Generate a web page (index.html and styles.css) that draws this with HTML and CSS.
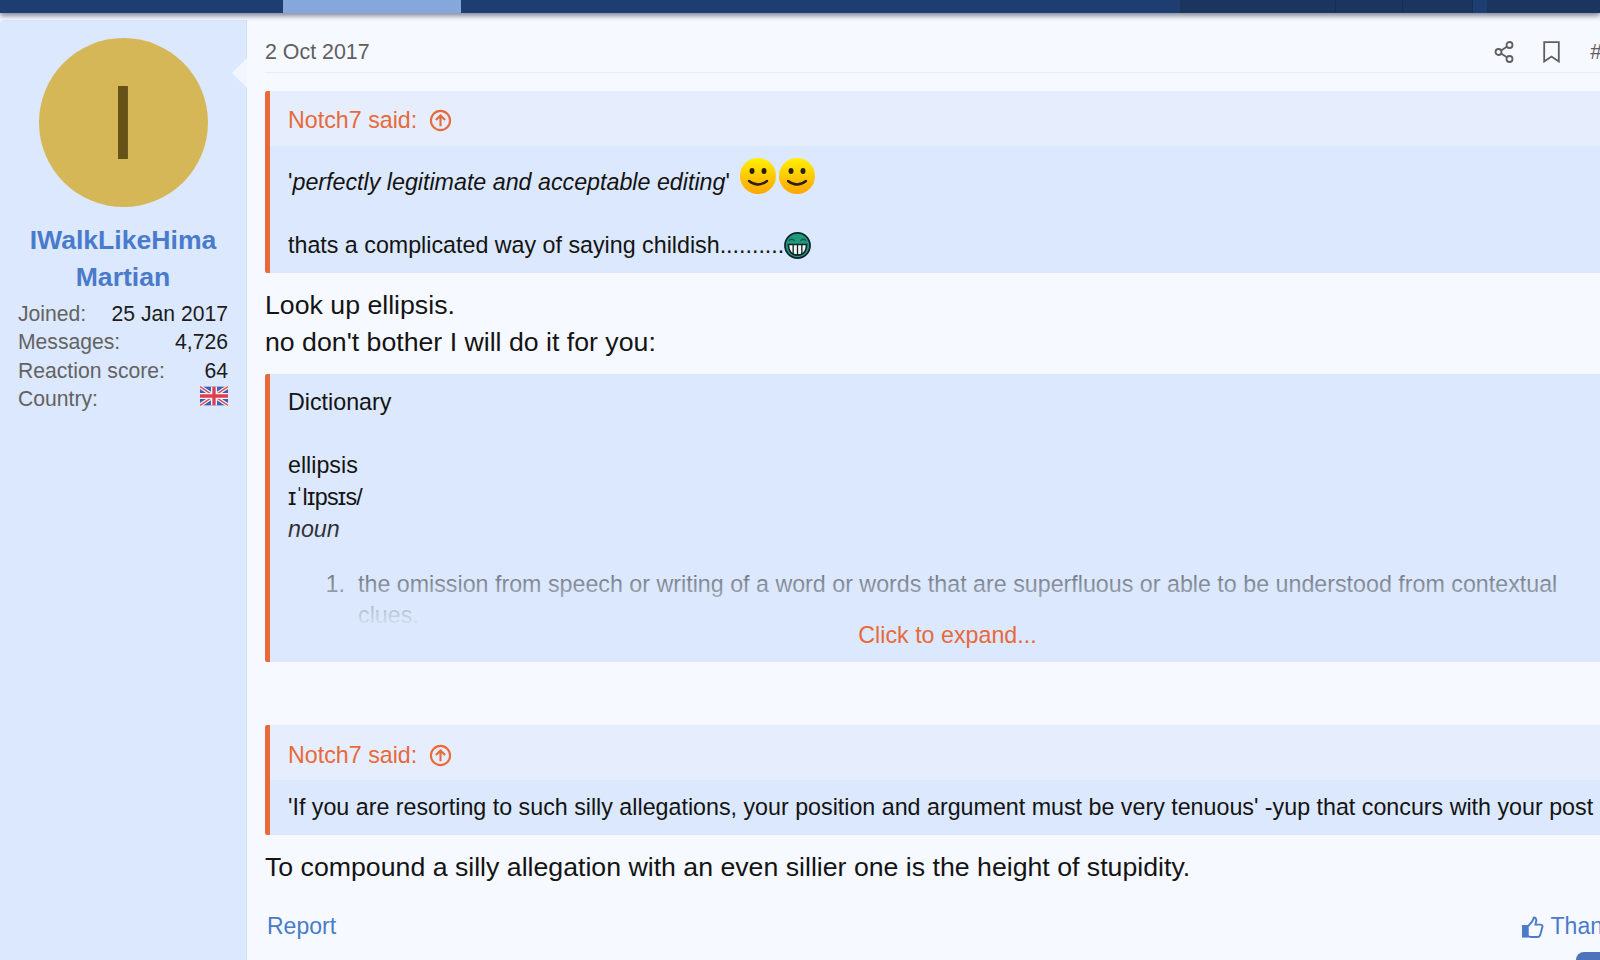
FILE: index.html
```html
<!DOCTYPE html>
<html lang="en">
<head>
    <meta charset="UTF-8">
    <meta name="viewport" content="width=device-width, initial-scale=1.0">
    <title>Forum post</title>
    <link rel="stylesheet" href="styles.css">
</head>
<body>
    <div class="topbar">
        <div class="nav-seg nav-home"></div>
        <div class="nav-seg nav-active"></div>
        <div class="nav-seg nav-fill"></div>
        <div class="nav-seg nav-user nav-user-a"></div>
        <div class="nav-seg nav-user nav-user-b"></div>
        <div class="nav-seg nav-user nav-user-c"></div>
        <div class="nav-seg nav-mark"></div>
        <div class="nav-seg nav-end"></div>
    </div>
    <div class="post">
        <aside class="sidebar">
            <div class="avatar"><span>I</span></div>
            <a class="username">IWalkLikeHima<br>Martian</a>
            <dl class="stats">
                <div class="stat"><dt>Joined:</dt><dd>25 Jan 2017</dd></div>
                <div class="stat"><dt>Messages:</dt><dd>4,726</dd></div>
                <div class="stat"><dt>Reaction score:</dt><dd>64</dd></div>
                <div class="stat"><dt>Country:</dt><dd>
                    <svg class="flag" viewBox="0 0 60 40" width="28" height="20">
                        <rect width="60" height="40" fill="#3f5fb0"/>
                        <path d="M0 0L60 40M60 0L0 40" stroke="#f4f4f8" stroke-width="8"/>
                        <path d="M0 0L60 40M60 0L0 40" stroke="#dc4a5a" stroke-width="3"/>
                        <path d="M30 0V40M0 20H60" stroke="#f4f4f8" stroke-width="13"/>
                        <path d="M30 0V40M0 20H60" stroke="#dc3f50" stroke-width="7"/>
                    </svg>
                </dd></div>
            </dl>
        </aside>
        <main class="main">
            <span class="arrow"></span>
            <header class="post-head">
                <span>2 Oct 2017</span>
                <div class="post-tools">
                    <svg class="tool-share" viewBox="0 0 20 22" width="20" height="22" fill="none" stroke="#5f5f5f" stroke-width="1.8">
                        <circle cx="15.5" cy="4" r="3"/>
                        <circle cx="4.5" cy="11" r="3"/>
                        <circle cx="15.5" cy="18" r="3"/>
                        <path d="M7.1 9.4L12.9 5.7M7.1 12.6L12.9 16.3"/>
                    </svg>
                    <svg class="tool-mark" viewBox="0 0 17 22" width="17" height="22" fill="none" stroke="#5f5f5f" stroke-width="1.8">
                        <path d="M1.2 1.2H15.8V20.5L8.5 15.5L1.2 20.5Z"/>
                    </svg>
                    <span class="tool-num">#1</span>
                </div>
            </header>

            <blockquote class="quote quote-first">
                <div class="quote-title">Notch7 said:
                    <svg class="jump" viewBox="0 0 24 24" width="23" height="23" fill="none" stroke="#e8693a" stroke-width="2.2">
                        <circle cx="12" cy="12" r="10"/>
                        <path d="M12 18V7M7.2 11.5L12 6.7L16.8 11.5"/>
                    </svg>
                </div>
                <div class="quote-body quote-body-first">
                    <div class="smile-line"><span>'<em>perfectly legitimate and acceptable editing</em>'</span>
                        <span class="smilies">
                            <svg viewBox="0 0 36 36" width="36" height="36">
                                <defs>
                                    <linearGradient id="smileFill" x1="0" y1="0" x2="0" y2="1">
                                        <stop offset="0" stop-color="#fff000"/>
                                        <stop offset="1" stop-color="#ffa600"/>
                                    </linearGradient>
                                </defs>
                                <circle cx="18" cy="18" r="18" fill="url(#smileFill)"/>
                                <ellipse cx="12" cy="13" rx="2.5" ry="3" fill="#2a2010"/>
                                <ellipse cx="24" cy="13" rx="2.5" ry="3" fill="#2a2010"/>
                                <path d="M9 23Q18 30 27 23" fill="none" stroke="#2a2010" stroke-width="2.4" stroke-linecap="round"/>
                            </svg>
                            <svg viewBox="0 0 36 36" width="36" height="36">
                                <circle cx="18" cy="18" r="18" fill="url(#smileFill)"/>
                                <ellipse cx="12" cy="13" rx="2.5" ry="3" fill="#2a2010"/>
                                <ellipse cx="24" cy="13" rx="2.5" ry="3" fill="#2a2010"/>
                                <path d="M9 23Q18 30 27 23" fill="none" stroke="#2a2010" stroke-width="2.4" stroke-linecap="round"/>
                            </svg>
                        </span>
                    </div>
                    <div class="grin-line">thats a complicated way of saying childish..........<svg class="grin" viewBox="0 0 28 28" width="27" height="27">
                            <circle cx="14" cy="14" r="13" fill="#1f9a7c" stroke="#12232a" stroke-width="1.8"/>
                            <path d="M5 9Q8 6 11 9M17 9Q20 6 23 9" fill="none" stroke="#0c5a48" stroke-width="1.6"/>
                            <path d="M4.5 13H23.5Q23 24 14 24Q5 24 4.5 13Z" fill="#f4f8f4" stroke="#12232a" stroke-width="1.6"/>
                            <path d="M9.5 13V23M14 13V24M18.5 13V23" stroke="#12232a" stroke-width="1.4"/>
                        </svg></div>
                </div>
            </blockquote>

            <p class="text first-text">Look up ellipsis.<br>no don't bother I will do it for you:</p>

            <blockquote class="quote quote-long">
                <div class="quote-body quote-clip">
                    <div>Dictionary</div>
                    <div class="gap-line">ellipsis</div>
                    <div class="ipa">ɪˈlɪpsɪs/</div>
                    <div><em>noun</em></div>
                    <ol class="defs">
                        <li>the omission from speech or writing of a word or words that are superfluous or able to be understood from contextual clues.</li>
                    </ol>
                </div>
                <div class="expand"><a>Click to expand...</a></div>
            </blockquote>

            <blockquote class="quote quote-last">
                <div class="quote-title">Notch7 said:
                    <svg class="jump" viewBox="0 0 24 24" width="23" height="23" fill="none" stroke="#e8693a" stroke-width="2.2">
                        <circle cx="12" cy="12" r="10"/>
                        <path d="M12 18V7M7.2 11.5L12 6.7L16.8 11.5"/>
                    </svg>
                </div>
                <div class="quote-body quote-body-last">'If you are resorting to such silly allegations, your position and argument must be very tenuous' -yup that concurs with your post</div>
            </blockquote>

            <p class="text last-text">To compound a silly allegation with an even sillier one is the height of stupidity.</p>

            <footer class="post-foot">
                <a>Report</a>
                <a class="thanks">
                    <svg viewBox="0 0 24 24" width="23" height="24" fill="none" stroke="#4a7bcb" stroke-width="2">
                        <path d="M7.5 11L11.5 6.5C12.5 5 13 3.5 13.5 2C15.8 2 16.6 4.5 15.5 7.5L15 9.5H20.5C22.5 9.5 23 11.5 22 13L20 20.5C19.5 22 18.5 22.5 17 22.5H11C9.5 22.5 8.5 22 7.5 21.5"/>
                        <rect x="1.5" y="10.5" width="6" height="12" fill="#4a7bcb" stroke-width="1"/>
                    </svg>
                    Thanks
                </a>
            </footer>
        </main>
    </div>
    <div class="scroll-btn"></div>
</body>
</html>
```

FILE: styles.css
```css
body {
    margin: 0;
    width: 1600px;
    height: 960px;
    overflow: hidden;
    position: relative;
    font-family: 'Liberation Sans', Arial, sans-serif;
    background-color: #f6f9ff;
    color: #141414;
}
a {
    color: #4a7bcb;
    text-decoration: none;
}

/* Top nav strip */
.topbar {
    display: flex;
    height: 13px;
    box-shadow: 0 3px 5px rgba(60, 65, 90, 0.6);
    position: relative;
}
.nav-seg {
    background-color: #1e3e72;
}
.nav-home { width: 283px; }
.nav-active { width: 178px; background-color: #86a7dc; }
.nav-fill { width: 719px; }
.nav-user {
    box-sizing: border-box;
    background-color: #1c355f;
    border-right: 1px solid #182d52;
}
.nav-user-a { width: 156px; }
.nav-user-b { width: 67px; }
.nav-user-c { width: 70px; }
.nav-mark { width: 14px; }
.nav-end { flex: 1; background-color: #1c355f; }

/* Post */
.post {
    display: flex;
    margin-top: 7px;
    height: 940px;
}
.sidebar {
    width: 247px;
    flex: none;
    box-sizing: border-box;
    background-color: #dbe8fd;
    border-right: 1px solid #d0def3;
    border-top-left-radius: 4px;
    padding-top: 18px;
    text-align: center;
}
.avatar {
    width: 169px;
    height: 169px;
    margin: 0 auto;
    border-radius: 50%;
    background-color: #d5b758;
    color: #665217;
    font-size: 106px;
    line-height: 169px;
}
.username {
    display: block;
    margin-top: 15px;
    font-size: 26.6px;
    font-weight: bold;
    line-height: 37px;
}
.stats {
    margin: 4px 18px 0;
    font-size: 21.15px;
    line-height: 28.4px;
}
.stat {
    display: flex;
    justify-content: space-between;
}
.stat dt {
    color: #636363;
}
.stat dd {
    margin: 0;
    color: #1c1c1c;
}
.flag {
    display: block;
    margin-top: 1px;
}

.main {
    width: 1396px;
    flex: none;
    box-sizing: border-box;
    padding: 0 18px;
    position: relative;
}
.arrow {
    position: absolute;
    left: -15px;
    top: 38px;
    width: 0;
    height: 0;
    border-top: 15px solid transparent;
    border-bottom: 15px solid transparent;
    border-right: 15px solid #f0f5fe;
}
.post-head {
    display: flex;
    justify-content: space-between;
    align-items: center;
    height: 53px;
    box-sizing: border-box;
    padding: 12px 11px 0 0;
    border-bottom: 1px solid #e6ecf8;
    color: #5f5f5f;
    font-size: 21.4px;
}
.post-tools {
    display: flex;
    align-items: center;
}
.tool-mark { margin-left: 29px; }
.tool-num { margin-left: 30px; }

/* Quotes */
.quote {
    margin: 0;
    border-left: 5px solid #e8693a;
    border-radius: 2px;
    background-color: #dbe8fd;
    font-size: 23.25px;
    line-height: 31.7px;
    position: relative;
    overflow: hidden;
}
.quote-first { margin-top: 18px; }
.quote-title {
    height: 55px;
    box-sizing: border-box;
    padding: 4px 18px 0;
    display: flex;
    align-items: center;
    background-color: #e6eefd;
    color: #e8693a;
}
.quote-last .quote-title {
    padding-top: 6px;
}
.jump {
    margin-left: 12px;
}
.quote-body {
    padding: 13px 18px;
}
.quote-body-first {
    padding-top: 7px;
    height: 127px;
    box-sizing: border-box;
}
.smile-line {
    display: flex;
    align-items: flex-end;
    height: 46px;
}
.smilies {
    display: flex;
    gap: 3px;
    margin-left: 10px;
    margin-bottom: 5px;
}
.grin-line {
    display: flex;
    align-items: center;
    margin-top: 31px;
}
.grin {
    margin-left: 0;
}

.text {
    margin: 0;
    font-size: 26.7px;
    line-height: 37px;
}
.first-text {
    margin-top: 14px;
}

.quote-long {
    margin-top: 13px;
    height: 288px;
}
.quote-clip {
    height: 288px;
    box-sizing: border-box;
    overflow: hidden;
}
.gap-line {
    margin-top: 31.7px;
}
.ipa {
    letter-spacing: -0.7px;
}
.defs {
    margin: 23px 0 0;
    padding-left: 70px;
}
.defs li::marker {
    content: counter(list-item) ".\00a0\00a0";
}
.expand {
    position: absolute;
    left: 0;
    right: 0;
    bottom: 0;
    height: 150px;
    display: flex;
    align-items: flex-end;
    justify-content: center;
    padding-bottom: 10px;
    box-sizing: border-box;
    background: linear-gradient(to bottom, rgba(219, 232, 253, 0) 0%, rgba(219, 232, 253, 0.45) 40%, rgba(219, 232, 253, 1) 78%);
}
.expand a {
    color: #e8693a;
}

.quote-last {
    margin-top: 63px;
}
.quote-body-last {
    height: 55px;
    box-sizing: border-box;
    padding: 12px 18px;
    white-space: nowrap;
}
.last-text {
    margin-top: 14px;
}

.post-foot {
    display: flex;
    justify-content: space-between;
    align-items: center;
    margin-top: 27px;
    padding: 0 0 0 2px;
    font-size: 23px;
}
.thanks {
    display: flex;
    align-items: center;
    gap: 7px;
    margin-right: -1px;
}
.scroll-btn {
    position: absolute;
    left: 1576px;
    top: 952px;
    width: 60px;
    height: 40px;
    border-radius: 8px;
    background-color: #4d74bb;
}
```
